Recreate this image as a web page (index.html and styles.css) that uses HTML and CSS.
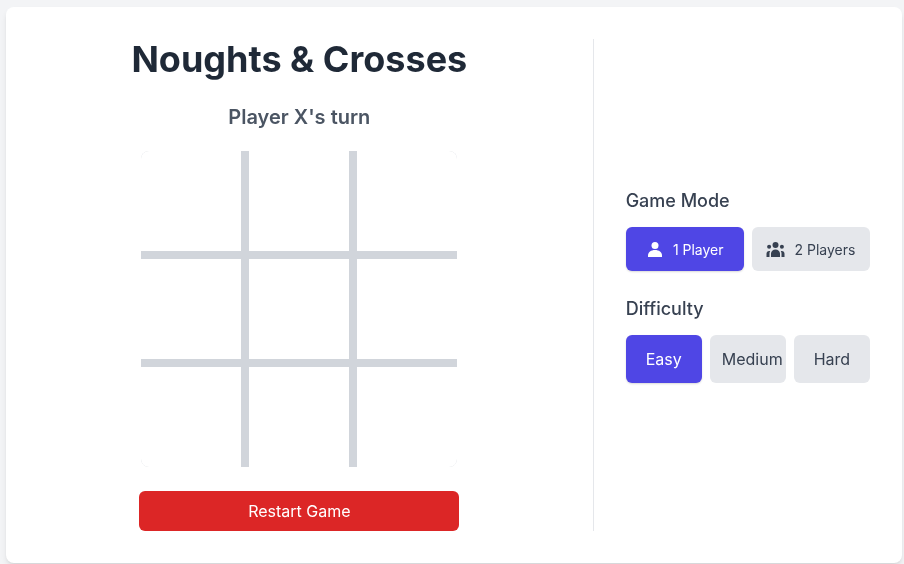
FILE: index.html
```html
<!DOCTYPE html>
<html lang="en">
<head>
  <meta charset="UTF-8" />
  <meta name="viewport" content="width=device-width, initial-scale=1" />
  <title>Noughts &amp; Crosses</title>
  <link rel="stylesheet" href="styles.css">
</head>
<body>
  <div class="card">
    <div class="game">
      <h1>Noughts &amp; Crosses</h1>
      <p class="status">Player X's turn</p>
      <div class="board">
        <div class="cell"></div>
        <div class="cell"></div>
        <div class="cell"></div>
        <div class="cell"></div>
        <div class="cell"></div>
        <div class="cell"></div>
        <div class="cell"></div>
        <div class="cell"></div>
        <div class="cell"></div>
      </div>
      <button class="restart">Restart Game</button>
    </div>
    <div class="settings">
      <h2>Game Mode</h2>
      <div class="options mode">
        <button class="option active">
          <svg class="icon" width="17" height="16" viewBox="-2 -1 17 16" fill="currentColor"><circle cx="7" cy="3.5" r="3.500"/><path d="M0 15v-1.600C0 10.200 3 8 7 8s7 2.200 7 5.400V15z"/></svg>
          <span>1 Player</span>
        </button>
        <button class="option">
          <svg class="icon" width="18" height="16" viewBox="-.5 -1 18 16" fill="currentColor"><circle cx="9" cy="3" r="3"/><circle cx="2.600" cy="4.800" r="2"/><circle cx="15.400" cy="4.800" r="2"/><path d="M4.500 15v-3.400c0-2.300 2-4 4.500-4s4.500 1.700 4.500 4V15zM0 15v-3.200C0 10.200 1 9 2.600 9c.5 0 .8.100 1.100.2-.5.700-.7 1.500-.7 2.400V15zM18 15v-3.200C18 10.200 17 9 15.400 9c-.5 0-.8.100-1.100.2.5.700.7 1.500.7 2.400V15z"/></svg>
          <span>2 Players</span>
        </button>
      </div>
      <h2 class="second">Difficulty</h2>
      <div class="options level">
        <button class="option active">Easy</button>
        <button class="option">Medium</button>
        <button class="option">Hard</button>
      </div>
    </div>
  </div>
</body>
</html>
```

FILE: styles.css
```css
* {
  box-sizing: border-box;
}
body {
  margin: 0;
  font-family: Inter, "Liberation Sans", sans-serif;
  background-color: #f3f4f6;
  height: 100vh;
  padding: 7px 2px 1px 6px;
}
.card {
  display: flex;
  height: 556px;
  padding: 32px;
  background-color: #fff;
  border-radius: 8px;
  box-shadow: 0 4px 6px -1px rgba(0,0,0,0.1), 0 2px 4px -2px rgba(0,0,0,0.1);
  will-change: transform;
}
.game {
  width: 66.667%;
  padding-right: 32px;
  display: flex;
  flex-direction: column;
  align-items: center;
}
h1 {
  margin: 0 0 24px;
  font-size: 36px;
  line-height: 40px;
  font-weight: 700;
  color: #1f2937;
}
.status {
  margin: 0 0 20px;
  font-size: 20px;
  line-height: 28px;
  font-weight: 600;
  color: #4b5563;
}
.board {
  display: grid;
  grid-template-columns: repeat(3, 100px);
  grid-template-rows: repeat(3, 100px);
  gap: 8px;
  background-color: #d1d5db;
  border-radius: 8px;
  overflow: hidden;
}
.cell {
  background-color: #fff;
}
.restart {
  width: 320px;
  height: 40px;
  margin-top: 24px;
  border: none;
  border-radius: 6px;
  background-color: #dc2626;
  color: #fff;
  font-family: inherit;
  font-size: 16px;
}
.settings {
  flex: 1;
  border-left: 1px solid #e5e7eb;
  padding-left: 32px;
  display: flex;
  flex-direction: column;
  justify-content: center;
}
h2 {
  margin: 0 0 12px;
  font-size: 18px;
  line-height: 28px;
  font-weight: 500;
  color: #374151;
}
h2.second {
  margin-top: 24px;
}
.options {
  display: grid;
  gap: 8px;
}
.mode {
  grid-template-columns: repeat(2, minmax(0, 1fr));
}
.level {
  grid-template-columns: repeat(3, minmax(0, 1fr));
}
.option {
  height: 48px;
  padding: 0 12px;
  border: none;
  border-radius: 6px;
  background-color: #e5e7eb;
  color: #374151;
  font-family: inherit;
  font-size: 16px;
}
.mode .option {
  height: 44px;
  font-size: 14px;
  display: flex;
  align-items: center;
  justify-content: center;
  gap: 10px;
}
.icon {
  overflow: visible;
}
.option.active {
  background-color: #4f46e5;
  color: #fff;
  box-shadow: 0 1px 2px rgba(0,0,0,0.15);
}
```
